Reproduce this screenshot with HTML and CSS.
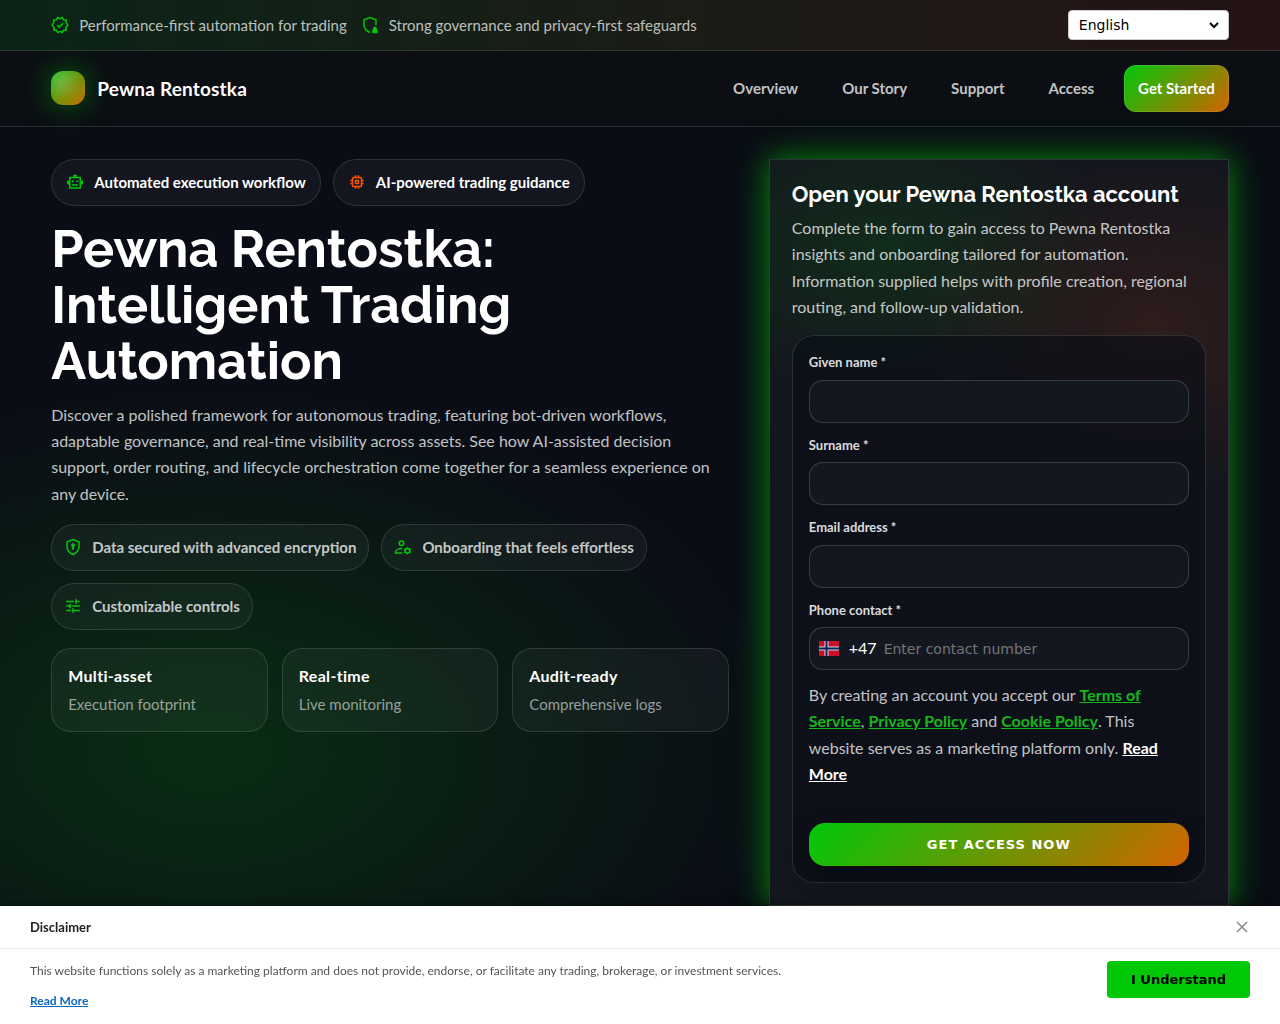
FILE: index.html
```html
<!DOCTYPE html>
<html lang="en">
<head>
    <meta charset="UTF-8">
    <meta name="viewport" content="width=device-width, initial-scale=1.0">
    <title>Pewna Rentostka</title>
    <link rel="stylesheet" href="styles.css">
</head>
<body>
    <div class="topbar">
        <div class="container topbar-inner">
            <div class="topbar-notes">
                <span class="note">
                    <svg class="icon" viewBox="0 0 24 24" fill="none" stroke="currentColor" stroke-width="2">
                        <path d="M12 3.5l3-1.6 1.8 3 3.5.4-.2 3.500L22.500 12l-2.400 3.200.2 3.500-3.500.4-1.800 3-3-1.600-3 1.600-1.800-3-3.500-.4.2-3.500L1.500 12l2.400-3.200-.2-3.500 3.500-.4 1.800-3z"/>
                        <path d="M8 12l3 3 5-5.500"/>
                    </svg>
                    Performance-first automation for trading
                </span>
                <span class="note">
                    <svg class="icon" viewBox="0 0 24 24">
                        <path fill="none" stroke="currentColor" stroke-width="2" d="M20 12V5l-8-3-8 3v6c0 5.500 3 9 8 11"/>
                        <path fill="currentColor" d="M16 18v-1.500a2.500 2.500 0 0 1 5 0V18h1v5h-7v-5z"/>
                    </svg>
                    Strong governance and privacy-first safeguards
                </span>
            </div>
            <select class="language" aria-label="Language">
                <option>English</option>
                <option>Norsk</option>
            </select>
        </div>
    </div>

    <header class="header">
        <div class="container header-inner">
            <a class="brand" href="#"><span class="brand-mark"></span>Pewna Rentostka</a>
            <nav class="nav">
                <a href="#">Overview</a>
                <a href="#">Our Story</a>
                <a href="#">Support</a>
                <a href="#">Access</a>
                <a class="nav-cta" href="#signup">Get Started</a>
            </nav>
        </div>
    </header>

    <main class="container hero">
        <section class="intro">
            <div class="pills">
                <span class="pill pill-strong">
                    <svg class="icon" viewBox="0 0 24 24">
                        <path fill="none" stroke="currentColor" stroke-width="2" stroke-linejoin="round" d="M5 6h14v14H5zM8 16h8"/>
                        <path fill="currentColor" d="M9 5a3 3 0 0 1 6 0zM4 9.500a3 3 0 0 0 0 6zM20 9.500a3 3 0 0 1 0 6z"/>
                        <circle cx="9" cy="11" r="1.500" fill="currentColor"/>
                        <circle cx="15" cy="11" r="1.500" fill="currentColor"/>
                    </svg>
                    Automated execution workflow
                </span>
                <span class="pill pill-strong">
                    <svg class="icon icon-orange" viewBox="0 0 24 24" fill="currentColor">
                        <path d="M17 17H7V7h10m4 4V9h-2V7a2 2 0 0 0-2-2h-2V3h-2v2h-2V3H9v2H7a2 2 0 0 0-2 2v2H3v2h2v2H3v2h2v2a2 2 0 0 0 2 2h2v2h2v-2h2v2h2v-2h2a2 2 0 0 0 2-2v-2h2v-2h-2v-2m-6 2h-2v-2h2m2-2H9v6h6z"/>
                    </svg>
                    AI-powered trading guidance
                </span>
            </div>

            <h1>Pewna Rentostka: Intelligent Trading Automation</h1>

            <p class="lead">Discover a polished framework for autonomous trading, featuring bot-driven workflows, adaptable governance, and real-time visibility across assets. See how AI-assisted decision support, order routing, and lifecycle orchestration come together for a seamless experience on any device.</p>

            <div class="pills">
                <span class="pill">
                    <svg class="icon" viewBox="0 0 24 24" fill="none" stroke="currentColor" stroke-width="2">
                        <path d="M12 2l8 3v6c0 5-3.500 9-8 11-4.500-2-8-6-8-11V5z"/>
                        <path d="M12 7.500v8" stroke-width="2.500"/>
                        <circle cx="12" cy="9.500" r="1.500"/>
                    </svg>
                    Data secured with advanced encryption
                </span>
                <span class="pill">
                    <svg class="icon" viewBox="0 0 24 24" fill="none" stroke="currentColor" stroke-width="2">
                        <circle cx="10" cy="7" r="3"/>
                        <path d="M11 14c-4 0-9 1.500-9 4.500V20h9"/>
                        <circle cx="18" cy="17" r="3"/>
                        <path d="M18 12v2M18 20v2M13.700 14.500l1.700 1M20.600 18.500l1.700 1M13.700 19.500l1.700-1M20.600 15.500l1.700-1"/>
                    </svg>
                    Onboarding that feels effortless
                </span>
                <span class="pill">
                    <svg class="icon" viewBox="0 0 24 24" fill="currentColor">
                        <path d="M3 17v2h6v-2zM3 5v2h10V5zm10 16v-2h8v-2h-8v-2h-2v6zM7 9v2H3v2h4v2h2V9zm14 4v-2H11v2zm-6-4h2V7h4V5h-4V3h-2z"/>
                    </svg>
                    Customizable controls
                </span>
            </div>

            <div class="stats">
                <div class="stat"><strong>Multi-asset</strong><span>Execution footprint</span></div>
                <div class="stat"><strong>Real-time</strong><span>Live monitoring</span></div>
                <div class="stat"><strong>Audit-ready</strong><span>Comprehensive logs</span></div>
            </div>
        </section>

        <section class="signup" id="signup">
            <h2>Open your Pewna Rentostka account</h2>
            <p class="signup-text">Complete the form to gain access to Pewna Rentostka insights and onboarding tailored for automation. Information supplied helps with profile creation, regional routing, and follow-up validation.</p>

            <form class="form">
                <div class="field">
                    <label for="first-name">Given name *</label>
                    <input type="text" id="first-name" required>
                </div>
                <div class="field">
                    <label for="last-name">Surname *</label>
                    <input type="text" id="last-name" required>
                </div>
                <div class="field">
                    <label for="email">Email address *</label>
                    <input type="email" id="email" required>
                </div>
                <div class="field">
                    <label for="phone">Phone contact *</label>
                    <div class="phone">
                        <svg class="flag" viewBox="0 0 20 15">
                            <path fill="#c8102e" d="M0 0h20v15H0z"/>
                            <path stroke="#d8d8e4" stroke-width="4" d="M0 7.500h20M7.500 0v15"/>
                            <path stroke="#00205b" stroke-width="2" d="M0 7.500h20M7.500 0v15"/>
                        </svg>
                        <span class="dial-code">+47</span>
                        <input type="tel" id="phone" placeholder="Enter contact number" required>
                    </div>
                </div>
                <p class="terms">By creating an account you accept our <a href="#">Terms of Service</a>, <a href="#">Privacy Policy</a> and <a href="#">Cookie Policy</a>. This website serves as a marketing platform only. <a class="more" href="#">Read More</a></p>
                <button type="submit" class="submit">GET ACCESS NOW</button>
            </form>
        </section>
    </main>

    <aside class="disclaimer" aria-label="Disclaimer">
        <div class="disclaimer-head">
            <strong>Disclaimer</strong>
            <button type="button" class="close" aria-label="Close">
                <svg viewBox="0 0 12 12" fill="none" stroke="currentColor" stroke-width="1.500"><path d="M1 1l10 10M11 1L1 11"/></svg>
            </button>
        </div>
        <div class="disclaimer-body">
            <div class="disclaimer-text">
                <p>This website functions solely as a marketing platform and does not provide, endorse, or facilitate any trading, brokerage, or investment services.</p>
                <a href="#">Read More</a>
            </div>
            <button type="button" class="accept">I Understand</button>
        </div>
    </aside>
</body>
</html>
```
FILE: styles.css
```css
* {
    margin: 0;
    padding: 0;
    box-sizing: border-box;
}

:root {
    --green: #00c807;
    --orange: #ff5000;
    --line: rgba(255, 255, 255, 0.12);
    --text: rgba(255, 255, 255, 0.76);
    --accent: linear-gradient(135deg, #00c80a, #d26400);
}

body {
    min-height: 100vh;
    font-family: Lato, "Liberation Sans", sans-serif;
    font-size: 16px;
    line-height: 1.65;
    color: #fff;
    background:
        radial-gradient(ellipse 580px 360px at 210px 750px, rgba(0, 200, 7, 0.17), transparent),
        #0a0d15;
}

.container {
    width: 92%;
    margin: 0 auto;
}

.icon {
    width: 18px;
    height: 18px;
    flex: none;
    color: var(--green);
}

.icon-orange {
    color: var(--orange);
}

/* top bar */
.topbar {
    padding: 10px 0;
    border-bottom: 1px solid var(--line);
    background: linear-gradient(90deg, #0b2417, #1b1c16 55%, #241314);
}

.topbar-inner,
.header-inner {
    display: flex;
    align-items: center;
    justify-content: space-between;
}

.topbar-notes {
    display: flex;
    gap: 14px;
}

.note {
    display: flex;
    align-items: center;
    gap: 10px;
    font-size: 15px;
    color: rgba(255, 255, 255, 0.72);
}

.language {
    width: 161px;
    height: 30px;
    padding: 0 24px 0 10px;
    appearance: none;
    border: 1px solid #ccc;
    border-radius: 4px;
    background: #fff url("data:image/svg+xml,%3Csvg xmlns='http://www.w3.org/2000/svg' viewBox='0 0 10 10' fill='none' stroke='black' stroke-width='2'%3E%3Cpath d='M1 3l4 4 4-4'/%3E%3C/svg%3E") no-repeat right 9px center / 10px;
    color: #000;
    font-family: "DejaVu Sans", sans-serif;
    font-size: 14px;
}

/* header */
.header {
    padding: 14px 0;
    border-bottom: 1px solid var(--line);
    background: #0b0e13;
}

.brand {
    display: flex;
    align-items: center;
    gap: 12px;
    font-size: 19px;
    font-weight: 700;
    letter-spacing: 0.01em;
    color: #fff;
    text-decoration: none;
}

.brand-mark {
    width: 34px;
    height: 34px;
    border-radius: 12px;
    background:
        radial-gradient(circle at 30% 30%, rgba(255, 255, 255, 0.22), transparent 60%),
        linear-gradient(135deg, #14b813, #c87000);
    box-shadow: 0 0 30px rgba(0, 200, 7, 0.5);
}

.nav {
    display: flex;
    align-items: center;
    gap: 16px;
}

.nav a {
    padding: 10px 13px;
    border: 1px solid transparent;
    color: var(--text);
    font-weight: 700;
    font-size: 15px;
    text-decoration: none;
}

.nav .nav-cta {
    border-color: var(--line);
    border-radius: 12px;
    background: var(--accent) border-box;
    color: #fff;
}

/* hero */
.hero {
    display: grid;
    grid-template-columns: minmax(0, 1fr) 460px;
    gap: 40px;
    align-items: start;
    padding: 32px 0;
}

.pills {
    display: flex;
    flex-wrap: wrap;
    gap: 12px;
}

.pill {
    display: flex;
    align-items: center;
    gap: 10px;
    padding: 10px 12px;
    border: 1px solid var(--line);
    border-radius: 999px;
    background: rgba(255, 255, 255, 0.04);
    color: var(--text);
    font-size: 15px;
    font-weight: 700;
}

.pill-strong {
    padding: 10px 14px;
    color: #fff;
}

h1,
h2 {
    font-family: Raleway, "Open Sans", sans-serif;
    font-weight: 700;
}

h1 {
    margin: 15px 0 13px;
    font-size: 52px;
    line-height: 56px;
}

.lead {
    margin-bottom: 17px;
    color: var(--text);
}

.stats {
    display: grid;
    grid-template-columns: repeat(3, 1fr);
    gap: 14px;
    margin-top: 18px;
}

.stat {
    display: flex;
    flex-direction: column;
    gap: 3px;
    padding: 14px 16px;
    border: 1px solid var(--line);
    border-radius: 20px;
    background: rgba(255, 255, 255, 0.04);
}

.stat strong {
    letter-spacing: 0.02em;
}

.stat span {
    font-size: 15px;
    color: rgba(255, 255, 255, 0.56);
}

/* signup card */
.signup {
    padding: 22px;
    border: 1px solid var(--line);
    background:
        radial-gradient(ellipse 230px 150px at 25% 90px, rgba(0, 160, 7, 0.16), transparent),
        radial-gradient(ellipse 250px 170px at 84% 165px, rgba(255, 80, 0, 0.11), transparent),
        #14161e;
    box-shadow:
        0 0 26px rgba(0, 200, 7, 0.55),
        0 0 50px rgba(0, 200, 7, 0.2);
}

.signup h2 {
    margin-bottom: 8px;
    font-size: 22px;
    line-height: 25px;
}

.signup-text {
    margin-bottom: 15px;
    color: var(--text);
}

.form {
    display: flex;
    flex-direction: column;
    gap: 12px;
    padding: 16px;
    border: 1px solid var(--line);
    border-radius: 22px;
    background: rgba(9, 13, 22, 0.6);
}

.field {
    display: flex;
    flex-direction: column;
    gap: 6px;
}

.field label {
    font-size: 13px;
    font-weight: 700;
    color: rgba(255, 255, 255, 0.86);
}

.field > input,
.phone {
    height: 43px;
    padding: 0 14px;
    border: 1px solid rgba(255, 255, 255, 0.16);
    border-radius: 14px;
    background: #131820;
    color: #fff;
}

.phone {
    display: flex;
    align-items: center;
    padding: 0 9px;
}

.flag {
    width: 20px;
    height: 15px;
    margin-right: 10px;
}

.dial-code {
    margin-right: 7px;
}

.phone input {
    flex: 1;
    min-width: 0;
    border: 0;
    outline: 0;
    background: none;
    color: #fff;
    font-family: "DejaVu Sans", sans-serif;
    font-size: 14px;
}

.phone input::placeholder {
    color: #757575;
}

.terms {
    color: var(--text);
}

.terms a {
    color: #14b81a;
    font-weight: 700;
}

.terms .more {
    color: #fff;
}

.submit {
    height: 43px;
    margin-top: 23px;
    border: 0;
    border-radius: 16px;
    background: var(--accent);
    box-shadow: 0 10px 24px rgba(0, 0, 0, 0.4);
    color: #fff;
    font-family: "DejaVu Sans", sans-serif;
    font-size: 13px;
    font-weight: 700;
    letter-spacing: 1px;
}

/* disclaimer banner */
.disclaimer {
    position: fixed;
    left: 0;
    right: 0;
    bottom: 0;
    background: #fff;
    color: #222;
    box-shadow: 0 -2px 10px rgba(0, 0, 0, 0.3);
}

.disclaimer-head {
    display: flex;
    align-items: center;
    justify-content: space-between;
    padding: 11px 30px 10px;
    border-bottom: 1px solid #e6e6e6;
    font-size: 13px;
}

.close {
    width: 16px;
    height: 16px;
    padding: 2px;
    border: 0;
    background: none;
    color: #888;
}

.close svg {
    display: block;
}

.disclaimer-body {
    display: flex;
    align-items: flex-start;
    justify-content: space-between;
    padding: 12px 30px 13px;
}

.disclaimer-text {
    font-size: 12px;
    line-height: 20px;
    color: #555;
}

.disclaimer-text p {
    margin-bottom: 10px;
}

.disclaimer-text a {
    color: #0b66c0;
    font-weight: 700;
}

.accept {
    height: 37px;
    padding: 0 24px;
    border: 0;
    border-radius: 4px;
    background: #00c807;
    color: #000;
    font-family: "DejaVu Sans", sans-serif;
    font-size: 13px;
    font-weight: 700;
}
```
